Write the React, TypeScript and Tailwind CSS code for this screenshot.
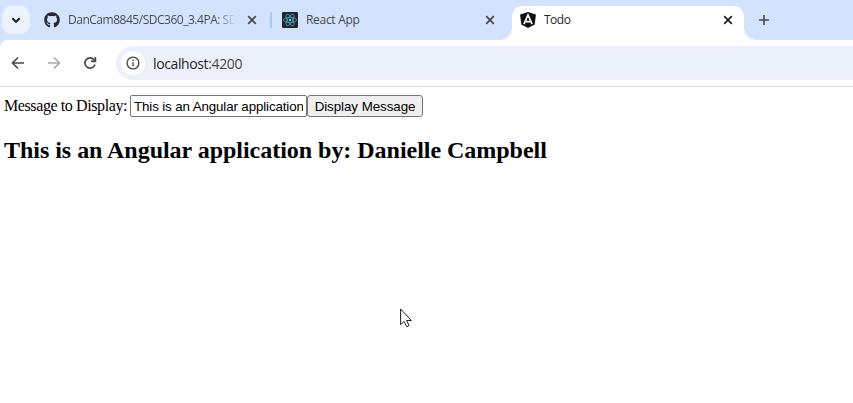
import React from "react";
import { FaGithub } from "react-icons/fa";

const ui = "font-['Open_Sans','Noto_Sans',sans-serif]";

function Close({ color }: { color: string }) {
  return (
    <svg className="size-4 shrink-0" viewBox="0 0 16 16" fill="none" stroke={color} strokeWidth="1.7">
      <path d="M4.2 4.2l7.6 7.6M11.8 4.2l-7.6 7.6" />
    </svg>
  );
}

function ReactLogo() {
  return (
    <svg className="size-4 shrink-0" viewBox="0 0 16 16" fill="none" stroke="#4fa9c2" strokeWidth="0.8">
      <rect width="16" height="16" rx="1.2" fill="#20232a" stroke="none" />
      <ellipse cx="8" cy="8" rx="6.6" ry="2.6" />
      <ellipse cx="8" cy="8" rx="6.6" ry="2.6" transform="rotate(60 8 8)" />
      <ellipse cx="8" cy="8" rx="6.6" ry="2.6" transform="rotate(120 8 8)" />
      <circle cx="8" cy="8" r="1.2" fill="#61dafb" stroke="none" />
    </svg>
  );
}

function AngularLogo() {
  return (
    <svg className="size-4 shrink-0" viewBox="0 0 16 16">
      <path d="M8 0l7.9 2.6-1.2 9.8L8 16l-6.7-3.6L.1 2.6z" fill="#0f111b" />
      <path d="M3.9 12.2L8 3l4.1 9.2M5.5 9.6h5" fill="none" stroke="#fff" strokeWidth="1.7" />
    </svg>
  );
}

function Flare({ flip }: { flip?: boolean }) {
  return (
    <svg className={flip ? "h-3 w-3 shrink-0 -scale-x-100" : "h-3 w-3 shrink-0"} viewBox="0 0 12 12">
      <path d="M12 0v12H0A12 12 0 0 0 12 0z" fill="#fff" />
    </svg>
  );
}

function TabStrip() {
  return (
    <div className="flex h-10 bg-[#d3e3fd]">
      <div className="mt-1.5 ml-0.5 flex size-7 shrink-0 items-center justify-center rounded-[10px] bg-[#ecf3fe]">
        <svg className="size-4" viewBox="0 0 16 16" fill="none" stroke="#1f1f1f" strokeWidth="1.9">
          <path d="M4.3 6.2L8 9.8l3.7-3.6" />
        </svg>
      </div>
      <div className="flex h-10 w-[240px] shrink-0 items-center pl-3.5">
        <FaGithub className="size-4 shrink-0 text-[#24292f]" />
        <span className="ml-2 w-[168px] shrink-0 overflow-hidden bg-gradient-to-r from-[#474747] from-[88%] to-transparent bg-clip-text text-[12px] tracking-[-0.48px] whitespace-nowrap text-transparent">
          DanCam8845/SDC360_3.4PA: SD
        </span>
        <span className="ml-2 flex">
          <Close color="#474747" />
        </span>
      </div>
      <div className="mt-3 h-4 w-0.5 shrink-0 rounded-full bg-[#a8c7fa]" />
      <div className="flex h-10 w-[228px] shrink-0 items-center pl-2.5">
        <ReactLogo />
        <span className="ml-2 w-[168px] shrink-0 text-[12px] tracking-[-0.3px] text-[#474747]">React App</span>
        <span className="ml-2 flex">
          <Close color="#474747" />
        </span>
      </div>
      <div className="flex shrink-0 items-end">
        <Flare />
        <div className="flex h-[34px] w-[232px] items-center rounded-t-[10px] bg-white pb-1.5 pl-2">
          <AngularLogo />
          <span className="ml-2 w-[170px] shrink-0 text-[12px] tracking-[-0.5px] text-[#1f1f1f]">Todo</span>
          <span className="ml-1.5 flex">
            <Close color="#1f1f1f" />
          </span>
        </div>
        <Flare flip />
      </div>
      <svg className="mt-3 size-4 shrink-0" viewBox="0 0 16 16" fill="none" stroke="#474747" strokeWidth="1.6">
        <path d="M8 3v10M3 8h10" />
      </svg>
    </div>
  );
}

function Toolbar() {
  return (
    <div className="bg-[#d3e3fd]">
      <div className="flex h-[47px] items-center rounded-tl-lg border-b border-[#dfdfdf] bg-white pl-2.5">
        <svg className="size-4 shrink-0" viewBox="0 0 16 16" fill="none" stroke="#474747" strokeWidth="1.6">
          <path d="M14 8H3M8 2.5L2.5 8 8 13.5" />
        </svg>
        <svg className="ml-5 size-4 shrink-0" viewBox="0 0 16 16" fill="none" stroke="#a9a9a9" strokeWidth="1.6">
          <path d="M2 8h11M8 2.5L13.5 8 8 13.5" />
        </svg>
        <svg className="ml-5 size-4 shrink-0" viewBox="0 0 16 16" fill="none" stroke="#474747" strokeWidth="1.7">
          <path d="M12.9 9.5A5.1 5.1 0 1 1 12 4.8L13 6" />
          <path d="M13.4 2v4.4H9" />
        </svg>
        <div className="ml-[18px] flex h-[34px] flex-1 items-center rounded-l-full bg-[#ecf0fa] pl-[5px]">
          <div className="flex size-6 items-center justify-center rounded-full bg-white">
            <svg className="size-4" viewBox="0 0 16 16" fill="none" stroke="#474747" strokeWidth="1.4">
              <circle cx="8" cy="8" r="5.9" />
              <path d="M8 7.2v4M8 4.6v1.5" />
            </svg>
          </div>
          <span className="ml-2 text-[14px] tracking-[-0.38px] text-[#1f1f1f]">
            localhost<span className="text-[#474747]">:4200</span>
          </span>
        </div>
      </div>
    </div>
  );
}

export default function App() {
  return (
    <div className="relative h-[403px] w-[853px] overflow-hidden bg-white">
      <div className={ui}>
        <TabStrip />
        <Toolbar />
      </div>
      <main className="pt-2 pl-1 font-['Liberation_Serif',serif] text-black">
        <div className="flex h-[22px] items-center">
          <label htmlFor="message" className="w-[126px] shrink-0 text-[16px] tracking-[-0.4px] whitespace-nowrap">
            Message to Display:
          </label>
          <input
            id="message"
            className="h-[22px] w-[177px] rounded-[2px] border border-[#767676] bg-white px-[3px] pt-px font-['Liberation_Sans',sans-serif] text-[13.333px] tracking-[-0.12px]"
            defaultValue="This is an Angular application by: Danielle Campbell"
          />
          <button className="h-[22px] w-[116px] rounded-[3px] border border-[#767676] bg-[#efefef] pt-px font-['Liberation_Sans',sans-serif] text-[13.333px] leading-[19px] tracking-[-0.05px] whitespace-nowrap">
            Display Message
          </button>
        </div>
        <h2 className="mt-[19px] text-[24px] leading-7 font-bold tracking-[-0.03px] whitespace-nowrap">
          This is an Angular application by: Danielle Campbell
        </h2>
      </main>
      <svg className="absolute top-[308px] left-[400px] h-5 w-3" viewBox="0 0 12 20" fill="#fff" stroke="#1c1c2c" strokeWidth="1">
        <path d="M.6 1v15.6l3.5-3.2 2.6 5.3 2.4-1.1-2.5-5.1h4.8z" />
      </svg>
    </div>
  );
}
